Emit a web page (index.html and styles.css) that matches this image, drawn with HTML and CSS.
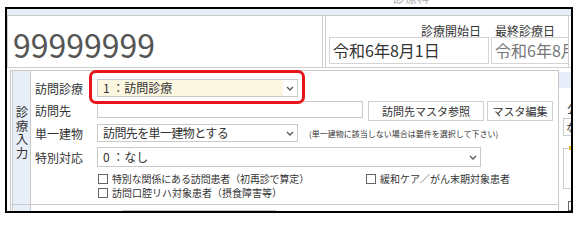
FILE: index.html
```html
<!DOCTYPE html>
<html lang="ja">
<head>
<meta charset="utf-8">
<title>訪問診療</title>
<link rel="stylesheet" href="styles.css">
</head>
<body>
<div class="above"><span class="above-label">診療科</span></div>
<div class="frame">
  <div class="strip"></div>
  <div class="header">
    <div class="idbox"><span class="idnum">99999999</span></div>
    <div class="datebox">
      <div class="datecol">
        <div class="dlabel right">診療開始日</div>
        <div class="dinput">令和6年8月1日</div>
      </div>
      <div class="datecol">
        <div class="dlabel left">最終診療日</div>
        <div class="dinput muted">令和6年8月1日</div>
      </div>
    </div>
  </div>
  <div class="body">
    <div class="leftcol">
      <div class="main">
        <div class="side"><span class="vtext">診療入力</span></div>
        <div class="content">
          <div class="row r1">
            <div class="lbl">訪問診療</div>
            <div class="sel yellow w201">
              <div class="val">1 ：訪問診療</div>
              <div class="dd"><svg width="8" height="5" viewBox="0 0 8 5"><polyline points="1,1 4,4 7,1" fill="none" stroke="#555" stroke-width="1.3"/></svg></div>
            </div>
          </div>
          <div class="row r2">
            <div class="lbl tall">訪問先</div>
            <div class="inp"></div>
            <div class="btn b1">訪問先マスタ参照</div>
            <div class="btn b2">マスタ編集</div>
          </div>
          <div class="row r3">
            <div class="lbl">単一建物</div>
            <div class="sel w201">
              <div class="val narrow">訪問先を単一建物とする</div>
              <div class="dd"><svg width="8" height="5" viewBox="0 0 8 5"><polyline points="1,1 4,4 7,1" fill="none" stroke="#555" stroke-width="1.3"/></svg></div>
            </div>
            <div class="note">(単一建物に該当しない場合は要件を選択して下さい)</div>
          </div>
          <div class="row r4">
            <div class="lbl">特別対応</div>
            <div class="sel w384 h20">
              <div class="val">0 ：なし</div>
              <div class="dd"><svg width="8" height="5" viewBox="0 0 8 5"><polyline points="1,1 4,4 7,1" fill="none" stroke="#555" stroke-width="1.3"/></svg></div>
            </div>
          </div>
          <div class="row chk">
            <label class="cb first"><span class="box"></span><span class="ctext tight">特別な関係にある訪問患者（初再診で算定）</span></label>
            <label class="cb"><span class="box"></span><span class="ctext">緩和ケア／がん末期対象患者</span></label>
          </div>
          <div class="row chk">
            <label class="cb"><span class="box"></span><span class="ctext">訪問口腔リハ対象患者（摂食障害等）</span></label>
          </div>
        </div>
        <div class="highlight"></div>
      </div>
      <div class="next">
        <div class="side"></div>
        <div class="next-content"><div class="next-inp"></div></div>
      </div>
    </div>
    <div class="rp">
      <div class="rp-head"></div>
      <div class="rp-title">公費</div>
      <div class="rp-box1">なし</div>
      <div class="rp-mark"></div>
      <div class="rp-box2"></div>
      <div class="rp-check"></div>
    </div>
  </div>
</div>
</body>
</html>
```

FILE: styles.css
```css
* { box-sizing: border-box; }
html, body { margin: 0; padding: 0; background: #fff; }
body {
  font-family: "Noto Sans CJK JP", "Noto Sans", sans-serif;
  color: #333;
  width: 582px;
  height: 223px;
  overflow: hidden;
}

.above { height: 7px; overflow: hidden; padding-left: 393px; }
.above-label { display: block; font-size: 12px; line-height: 14px; margin-top: -9px; color: #aaa; }

.frame {
  width: 568px;
  height: 206px;
  margin-left: 5px;
  border: 2px solid #000;
  overflow: hidden;
}

.strip { height: 7px; background: #e8eef8; border-bottom: 1px solid #c9c9c9; }

.header { display: flex; height: 52px; border-bottom: 1px solid #cfcfcf; }
.idbox {
  width: 316px;
  flex: none;
  border-left: 1px solid #cfcfcf;
  border-right: 1px solid #cfcfcf;
  padding: 12px 0 0 5px;
}
.idnum { display: block; font-size: 32px; line-height: 32px; color: #555; }

.datebox {
  width: 244px;
  flex: none;
  margin-left: 2px;
  border-left: 1px solid #cfcfcf;
  border-right: 1px solid #cfcfcf;
  display: flex;
  gap: 2px;
  padding: 8px 0 0 3px;
  overflow: hidden;
}
.datecol { width: 160px; flex: none; }
.dlabel { font-size: 12px; line-height: 13px; height: 13px; white-space: nowrap; }
.dlabel.right { text-align: right; padding-right: 8px; }
.dlabel.left { padding-left: 4px; }
.dinput {
  height: 27px;
  border: 1px solid #d4d4d4;
  font-size: 16px;
  line-height: 25px;
  padding-left: 3px;
  white-space: nowrap;
  color: #333;
}
.dinput.muted { color: #777; }

.body { display: flex; margin-top: 2px; }
.leftcol { width: 552px; flex: none; padding-left: 3px; }

.main {
  position: relative;
  width: 549px;
  height: 135px;
  border: 1px solid #c9c9c9;
  display: flex;
  padding-left: 1px;
}
.side {
  width: 19px;
  flex: none;
  background: #e8eef8;
  border-left: 1px solid #c9c9c9;
  border-right: 1px solid #c9c9c9;
  display: flex;
  align-items: center;
  justify-content: center;
  padding-bottom: 10px;
  color: #333;
}
.vtext {
  writing-mode: vertical-rl;
  font-size: 12.5px;
  line-height: 14px;
  letter-spacing: 1px;
  white-space: nowrap;
}
.content { flex: 1; padding: 8px 0 0 4px; }

.row { display: flex; align-items: center; }
.r1 { height: 18px; margin-bottom: 4px; }
.r2 { height: 20px; margin-bottom: 3px; align-items: flex-start; }
.r3 { height: 18px; margin-bottom: 5px; }
.r4 { height: 20px; margin-bottom: 5px; }
.chk { height: 14px; padding-left: 63px; }

.lbl { width: 62px; flex: none; font-size: 12px; white-space: nowrap; }
.lbl.tall { line-height: 20px; }

.sel {
  height: 18px;
  border: 1px solid #c9c9c9;
  background: #fff;
  display: flex;
  align-items: stretch;
  font-size: 12px;
  flex: none;
}
.sel.w201 { width: 201px; }
.sel.w384 { width: 384px; }
.sel.h20 { height: 20px; }
.sel .val { flex: 1; padding-left: 5px; line-height: 16px; white-space: nowrap; overflow: hidden; }
.sel.h20 .val { line-height: 18px; }
.sel .val.narrow { letter-spacing: -0.6px; }
.sel.yellow .val { background: #fbf7e1; }
.sel .dd { width: 14px; flex: none; display: flex; align-items: center; justify-content: center; }

.inp { width: 266px; height: 17px; border: 1px solid #c9c9c9; flex: none; }
.btn {
  height: 20px;
  border: 1px solid #cfcfcf;
  background: #fff;
  font-size: 11px;
  line-height: 18px;
  text-align: center;
  flex: none;
  white-space: nowrap;
}
.b1 { width: 116px; margin-left: 5px; }
.b2 { width: 66px; margin-left: 3px; }

.note { margin-left: 11px; font-size: 8px; white-space: nowrap; color: #333; }

.cb { display: flex; align-items: center; font-size: 10px; line-height: 14px; white-space: nowrap; }
.cb.first { width: 268px; flex: none; }
.box { width: 10px; height: 10px; border: 1px solid #666; background: #fff; flex: none; margin-right: 4px; }
.ctext.tight { letter-spacing: -0.15px; }

.highlight {
  position: absolute;
  left: 78px;
  top: -1px;
  width: 216px;
  height: 34px;
  border: 3px solid #e8141c;
  border-radius: 7px;
}

.next {
  width: 549px;
  height: 20px;
  border: 1px solid #c9c9c9;
  border-top: none;
  display: flex;
  padding-left: 1px;
}
.next .side { padding: 0; }
.next-content { flex: 1; padding: 5px 0 0 91px; }
.next-inp { width: 154px; height: 16px; border: 1px solid #c9c9c9; }

.rp { width: 12px; flex: none; overflow: hidden; }
.rp-head { height: 16px; margin-top: 2px; background: #e6edf8; }
.rp-title { margin-top: 14px; padding-left: 8px; font-size: 12px; line-height: 14px; height: 14px; white-space: nowrap; }
.rp-box1 {
  margin-top: 2px;
  margin-left: 4px;
  height: 18px;
  border: 1px solid #ccc;
  border-right: none;
  font-size: 11px;
  line-height: 16px;
  padding-left: 2px;
  white-space: nowrap;
  overflow: hidden;
}
.rp-mark { margin-top: 10px; margin-left: 10px; width: 2px; height: 4px; background: #f0b400; }
.rp-box2 { margin-top: -2px; margin-left: 4px; height: 41px; border: 1px solid #ccc; border-right: none; }
.rp-check { margin-top: 12px; margin-left: 9px; width: 10px; height: 10px; border: 1px solid #666; }
```
